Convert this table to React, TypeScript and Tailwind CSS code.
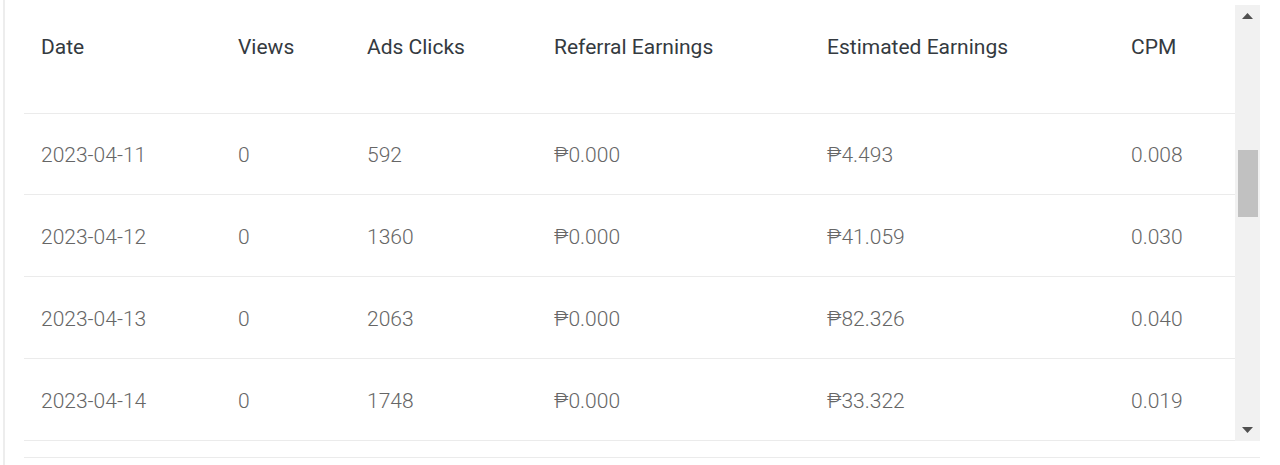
import React from 'react';

type Row = {
    date: string;
    views: string;
    clicks: string;
    referral: string;
    estimated: string;
    cpm: string;
};

const rows: Row[] = [
    { date: '2023-04-11', views: '0', clicks: '592', referral: '₱0.000', estimated: '₱4.493', cpm: '0.008' },
    { date: '2023-04-12', views: '0', clicks: '1360', referral: '₱0.000', estimated: '₱41.059', cpm: '0.030' },
    { date: '2023-04-13', views: '0', clicks: '2063', referral: '₱0.000', estimated: '₱82.326', cpm: '0.040' },
    { date: '2023-04-14', views: '0', clicks: '1748', referral: '₱0.000', estimated: '₱33.322', cpm: '0.019' },
];

// column widths measured off the row lines, 24px .. 1235px
const cols = 'grid grid-cols-[197px_129px_187px_273px_304px_121px]';

const headers = ['Date', 'Views', 'Ads Clicks', 'Referral Earnings', 'Estimated Earnings', 'CPM'];

const App: React.FC = () => {
    return (
        <div className="w-[1280px] h-[465px] bg-white flex overflow-hidden font-['Roboto','Liberation_Sans',sans-serif] text-[21px]">
            <div className="w-[3px]" />
            <div className="w-[2px] bg-[#ededed]" />
            <div className="w-[19px]" />

            <div className="w-[1236px] h-[458px] flex flex-col border-b border-[#ebebeb]">
                <div className="flex h-[441px]">
                    {/* table */}
                    <div className="w-[1211px] flex flex-col">
                        <div className={`${cols} h-[114px] border-b border-[#ebebeb] pt-[32px] text-[#343a40]`}>
                            {headers.map(h => (
                                <div key={h} className="pl-[17px] leading-[30px] whitespace-nowrap">{h}</div>
                            ))}
                        </div>
                        {rows.map((r, i) => (
                            <div
                                key={r.date}
                                className={`${cols} ${i === 0 ? 'h-[81px]' : 'h-[82px]'} items-center border-b border-[#ebebeb] text-[#666666] font-light`}
                            >
                                <div className="pl-[17px] pt-[4px]">{r.date}</div>
                                <div className="pl-[17px] pt-[4px]">{r.views}</div>
                                <div className="pl-[17px] pt-[4px]">{r.clicks}</div>
                                <div className="pl-[17px] pt-[4px]">{r.referral}</div>
                                <div className="pl-[17px] pt-[4px]">{r.estimated}</div>
                                <div className="pl-[17px] pt-[4px]">{r.cpm}</div>
                            </div>
                        ))}
                    </div>

                    {/* scrollbar */}
                    <div className="w-[25px] flex flex-col pt-[5px]">
                        <div className="flex-1 bg-[#f1f1f1] flex flex-col items-center">
                            <div className="h-[20px] w-full flex items-center justify-center pt-[2px]">
                                <svg width="11" height="6" viewBox="0 0 11 6">
                                    <path d="M5.5 0 L11 6 L0 6 Z" fill="#505050" />
                                </svg>
                            </div>
                            <div className="h-[125px]" />
                            <div className="w-[20px] h-[67px] bg-[#c1c1c1]" />
                            <div className="flex-1" />
                            <div className="h-[20px] w-full flex items-center justify-center pb-[2px]">
                                <svg width="11" height="6" viewBox="0 0 11 6">
                                    <path d="M0 0 L11 0 L5.5 6 Z" fill="#505050" />
                                </svg>
                            </div>
                        </div>
                    </div>
                </div>
            </div>
        </div>
    );
};

export default App;
